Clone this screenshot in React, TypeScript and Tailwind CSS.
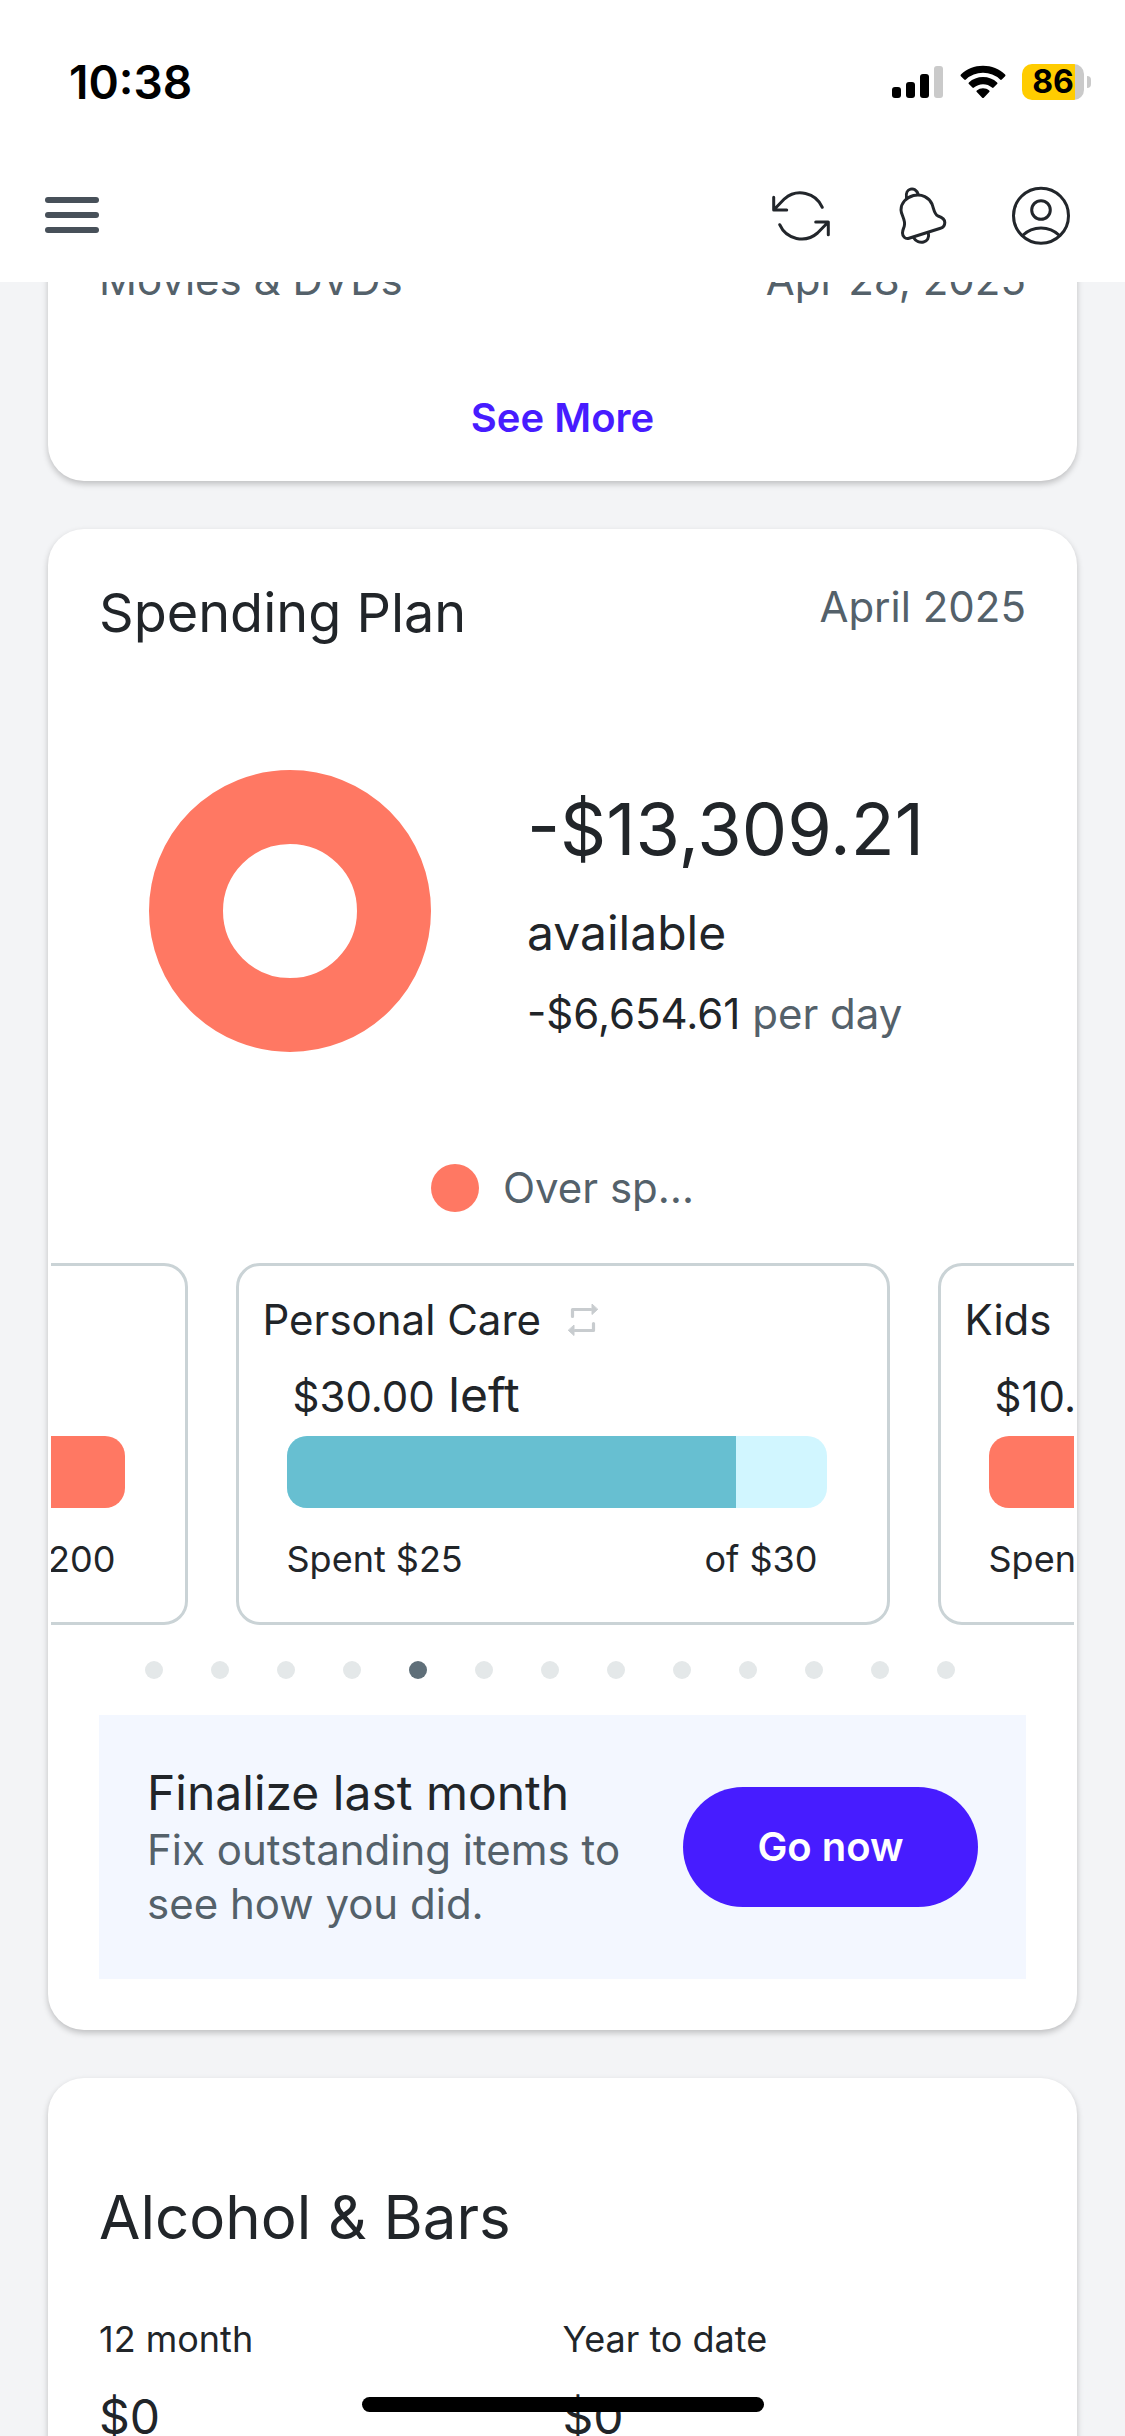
import type { ReactNode } from "react";

interface Budget {
  name: string;
  left: string;
  spent: string;
  total: string;
  percent: number;
  over?: boolean;
}

const budgets: Budget[] = [
  { name: "Dining", left: "$200.00", spent: "$400", total: "$200", percent: 100, over: true },
  { name: "Personal Care", left: "$30.00", spent: "$25", total: "$30", percent: 83.3 },
  { name: "Kids", left: "$10.00", spent: "$20", total: "$10", percent: 100, over: true },
];

const PAGE_COUNT = 13;
const ACTIVE_PAGE = 4;

function StatusBar() {
  return (
    <div className="flex h-[148px] items-start justify-between pt-16 pr-[34px] pl-[69px]">
      <span className="text-[46px] leading-9 font-semibold text-black">10:38</span>
      <div className="flex h-9 items-center">
        <svg className="mr-4 h-8 w-[52px]" viewBox="0 0 52 32">
          <rect x="0" y="21" width="9" height="11" rx="3" />
          <rect x="14" y="16" width="9" height="16" rx="3" />
          <rect x="28" y="8" width="9" height="24" rx="3" />
          <rect x="42" y="0" width="9" height="32" rx="3" fill="#cacaca" />
        </svg>
        <svg className="mr-4 h-[34px] w-[46px]" viewBox="0 0 46 34">
          <path d="M23 .8c8.5 0 16.300 3.300 22.100 8.700.5.500.5 1.200 0 1.700l-3.300 3.300c-.5.500-1.200.500-1.700 0A25 25 0 0 0 23 7.800a25 25 0 0 0-17.100 6.700c-.5.500-1.200.500-1.700 0L.9 11.200c-.5-.5-.5-1.200 0-1.700C6.700 4.100 14.500.8 23 .8z" />
          <path d="M23 12c5.400 0 10.300 2 14.100 5.400.5.500.5 1.200 0 1.700l-3.500 3.500c-.5.500-1.100.500-1.600 0A13.500 13.500 0 0 0 23 19.200c-3.400 0-6.600 1.300-9 3.400-.5.500-1.100.500-1.600 0l-3.500-3.500c-.5-.5-.5-1.200 0-1.700C12.700 14 17.600 12 23 12z" />
          <path d="M23 23.200c2.400 0 4.500.8 6.200 2.200.5.500.5 1.200 0 1.700l-5.400 5.600c-.5.500-1.100.500-1.600 0l-5.400-5.600c-.5-.5-.5-1.200 0-1.700a9.700 9.700 0 0 1 6.200-2.200z" />
        </svg>
        <div className="flex h-9 w-[62px] items-center justify-center overflow-hidden rounded-[10px] bg-linear-to-r from-[#ffcc00] from-86% to-[#cacaca] to-86% text-[32px] font-bold text-black">
          86
        </div>
        <div className="ml-[3px] h-3 w-1 rounded-r-full bg-[#cacaca]" />
      </div>
    </div>
  );
}

function NavBar() {
  return (
    <nav className="flex h-[134px] items-center justify-between pr-[54px] pl-[45px] text-[#22262b]">
      <button aria-label="Menu" className="flex w-[54px] flex-col gap-[9px]">
        <span className="h-1.5 rounded-full bg-[#475059]" />
        <span className="h-1.5 rounded-full bg-[#475059]" />
        <span className="h-1.5 rounded-full bg-[#475059]" />
      </button>
      <div className="flex gap-[60px]">
        <button aria-label="Refresh">
          <NavIcon>
            <path d="M2.700 12.300V25h13M2.700 25l10.800-11.200A24 24 0 0 1 51.300 22.300" />
            <path d="M57.300 49.700V37h-12.600M57.300 37 46.500 48A24 24 0 0 1 8.700 39.700" />
          </NavIcon>
        </button>
        <button aria-label="Notifications">
          <NavIcon>
            <path d="M13.300 41C15 35 10 30 10 25c0-7 5-12.500 12.500-14.500C31 8.500 38 12.500 41 19c2 5 2 10 6 12 4 1.300 6.800 3.500 6.800 6.500s-1.300 5-4.300 5.800L18 53.300c-4 1.200-6.500-2.300-6.500-5.300s1.200-4.500 1.800-7z" />
            <path d="M15.500 13C13.500 3 24.500 .5 27.200 9.500M22.500 52.500C27 60.500 40 58 37.300 48" />
          </NavIcon>
        </button>
        <button aria-label="Profile">
          <NavIcon>
            <circle cx="30" cy="30.700" r="27.500" />
            <circle cx="30" cy="25" r="9.300" />
            <path d="M11.500 50.500c10.500-10 26.500-10 37 0" />
          </NavIcon>
        </button>
      </div>
    </nav>
  );
}

function NavIcon({ children }: { children: ReactNode }) {
  return (
    <svg
      className="size-[60px]"
      viewBox="0 0 60 60"
      fill="none"
      stroke="currentColor"
      strokeWidth="3"
      strokeLinecap="round"
      strokeLinejoin="round"
    >
      {children}
    </svg>
  );
}

function RepeatIcon() {
  return (
    <svg className="h-[34px] w-8" viewBox="0 0 32 34" fill="none" stroke="#c8cccf" strokeLinecap="round" strokeLinejoin="round">
      <path d="M5.500 13.500v-7H24M26.500 20.500v7H8" strokeWidth="3.200" />
      <path d="M25 1.500v10l5.500-5zM7 22.500v10l-5.500-5z" fill="#c8cccf" strokeWidth="1" />
    </svg>
  );
}

function Card({ className = "", children }: { className?: string; children: ReactNode }) {
  return (
    <section className={`rounded-[36px] bg-white shadow-[0_3px_6px_rgba(0,0,0,0.22)] ${className}`}>
      {children}
    </section>
  );
}

function BudgetCard({ budget }: { budget: Budget }) {
  return (
    <div className="w-[654px] shrink-0 rounded-3xl border-[3px] border-[#cad3d6] pt-[27px] pb-[39px]">
      <div className="flex items-center gap-[26px] pl-6 text-[42px] leading-[54px]">
        {budget.name}
        <RepeatIcon />
      </div>
      <p className="mt-[18px] pl-[54px] text-[48px] leading-[60px]">
        <span className="text-[42px]">{budget.left}</span> left
      </p>
      <div className="mt-[9px] mr-[60px] ml-12">
        <div className={`h-[72px] overflow-hidden rounded-[20px] ${budget.over ? "bg-[#ff7863]" : "bg-[#d1f6ff]"}`}>
          <div
            className={`h-full ${budget.over ? "bg-[#ff7863]" : "bg-[#67bfd1]"}`}
            style={{ width: `${budget.percent}%` }}
          />
        </div>
        <div className="mt-[27px] flex justify-between pr-[9px] text-[36px] leading-[48px]">
          <span>Spent {budget.spent}</span>
          <span>of {budget.total}</span>
        </div>
      </div>
    </div>
  );
}

function SpendingPlan() {
  return (
    <Card className="pt-[51px] pb-[51px]">
      <div className="flex items-start justify-between px-[51px]">
        <h2 className="text-[54px] leading-[66px]">Spending Plan</h2>
        <span className="text-[42px] leading-[54px] text-[#54616a]">April 2025</span>
      </div>

      <div className="mt-[124px] flex items-center gap-24 pl-[101px]">
        <svg className="size-[282px]" viewBox="0 0 282 282">
          <circle cx="141" cy="141" r="104" fill="none" stroke="#ff7863" strokeWidth="74" />
        </svg>
        <div className="pt-1.5">
          <p className="text-[72px] leading-[84px]">-$13,309.21</p>
          <p className="mt-8 text-[48px] leading-[60px]">available</p>
          <p className="mt-6 text-[42px] leading-[54px]">
            -$6,654.61 <span className="text-[#54616a]">per day</span>
          </p>
        </div>
      </div>

      <div className="mt-[109px] flex items-center justify-center gap-6 text-[42px] leading-[54px] text-[#54616a]">
        <span className="size-12 rounded-full bg-[#ff7863]" />
        Over sp…
      </div>

      <div className="mx-[3px] mt-12 flex justify-center gap-12 overflow-hidden">
        {budgets.map((budget) => (
          <BudgetCard key={budget.name} budget={budget} />
        ))}
      </div>

      <div className="mt-9 flex justify-center gap-12 pr-[26px]">
        {Array.from({ length: PAGE_COUNT }, (_, i) => (
          <button
            key={i}
            aria-label={`Page ${i + 1}`}
            className={`size-[18px] rounded-full ${i === ACTIVE_PAGE ? "bg-[#5f6f79]" : "bg-[#e4e8e9]"}`}
          />
        ))}
      </div>

      {/* Finalize banner */}
      <div className="mx-[51px] mt-9 flex items-center justify-between gap-6 bg-[#f3f7ff] p-12">
        <div>
          <h3 className="text-[48px] leading-[60px]">Finalize last month</h3>
          <p className="text-[42px] leading-[54px] text-[#54616a]">Fix outstanding items to see how you did.</p>
        </div>
        <button className="h-[120px] w-[295px] shrink-0 rounded-full bg-[#471cff] text-[40px] font-semibold text-white">
          Go now
        </button>
      </div>
    </Card>
  );
}

function CategoryCard() {
  return (
    <Card className="px-[51px] pt-[103px] pb-[51px]">
      <h2 className="text-[60px] leading-[72px]">Alcohol &amp; Bars</h2>
      <dl className="mt-[62px] grid grid-cols-2">
        <div>
          <dt className="text-[36px] leading-[48px]">12 month</dt>
          <dd className="mt-6 text-[48px] leading-[60px]">$0</dd>
        </div>
        <div>
          <dt className="text-[36px] leading-[48px]">Year to date</dt>
          <dd className="mt-6 text-[48px] leading-[60px]">$0</dd>
        </div>
      </dl>
    </Card>
  );
}

export default function App() {
  return (
    <div className="relative flex h-screen flex-col overflow-hidden bg-[#f3f4f6] font-['Inter',sans-serif] text-[#212529]">
      <header className="z-10 shrink-0 bg-white">
        <StatusBar />
        <NavBar />
      </header>

      <main className="min-h-0 flex-1 overflow-hidden px-12">
        <div className="-mt-20 flex flex-col gap-12">
          <Card className="px-[51px] pt-[51px] pb-9">
            <div className="flex justify-between text-[42px] leading-[54px] text-[#54616a]">
              <span>Movies &amp; DVDs</span>
              <span>Apr 28, 2025</span>
            </div>
            <button className="mt-[84px] block w-full text-[40px] leading-[54px] font-semibold text-[#471cff]">
              See More
            </button>
          </Card>
          <SpendingPlan />
          <CategoryCard />
        </div>
      </main>

      {/* Home indicator */}
      <div className="absolute bottom-6 left-1/2 h-[15px] w-[402px] -translate-x-1/2 rounded-full bg-black" />
    </div>
  );
}
